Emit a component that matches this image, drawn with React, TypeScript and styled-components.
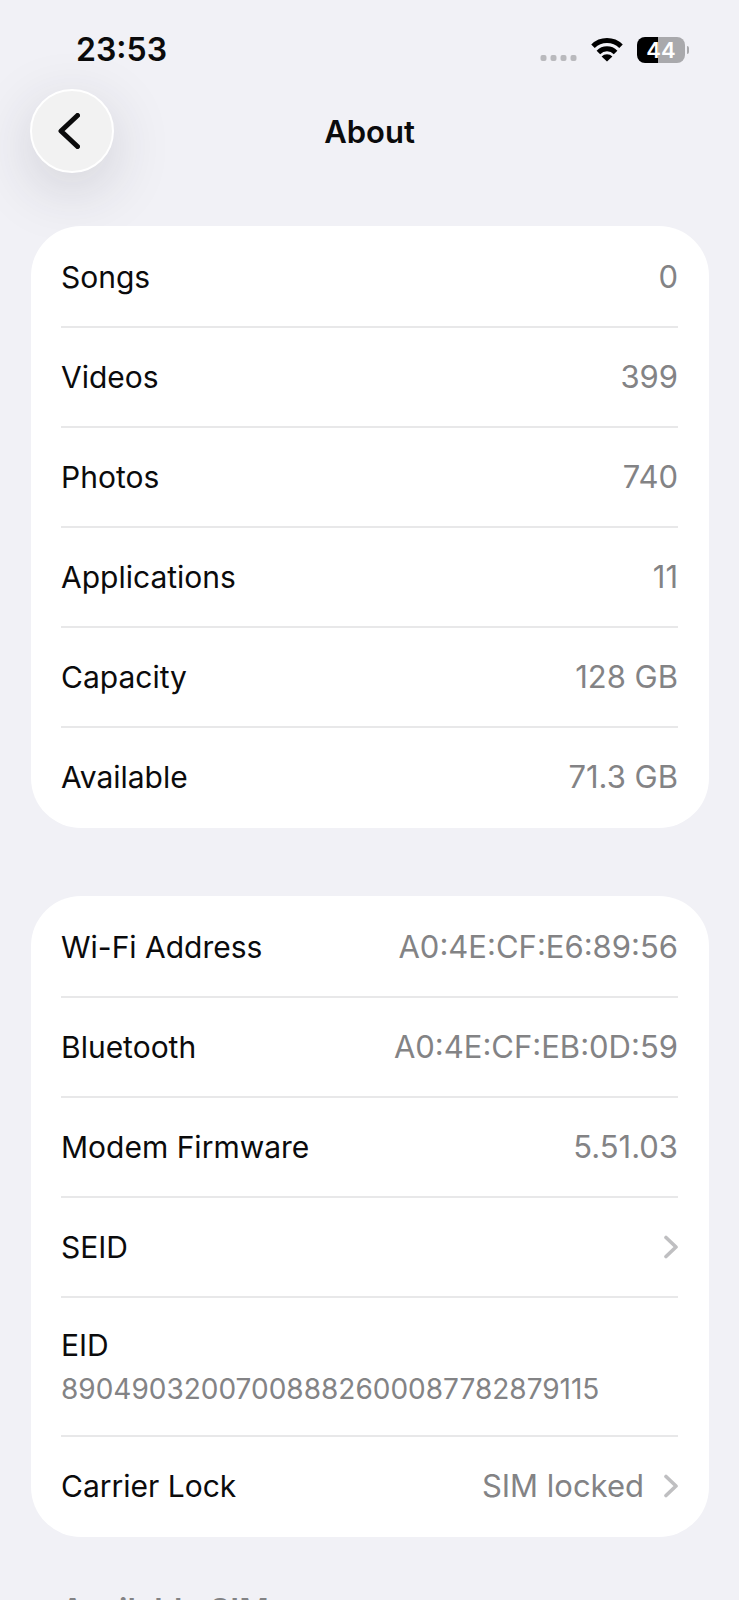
import React from 'react';
import styled, { createGlobalStyle } from 'styled-components';

const GlobalStyle = createGlobalStyle`
  *, *::before, *::after { box-sizing: border-box; }
  body { margin: 0; background: #f1f1f6; }
`;

const Screen = styled.div`
  display: flex;
  flex-direction: column;
  height: 100vh;
  overflow: hidden;
  background: #f1f1f6;
  color: #0b0b0c;
  font-family: Inter, Roboto, sans-serif;
  font-size: 31px;
  line-height: 38px;
`;

const StatusBar = styled.div`
  display: flex;
  flex: none;
  align-items: center;
  justify-content: space-between;
  height: 89px;
  padding: 10px 50px 0 76px;
`;

const Clock = styled.time`
  font-size: 32px;
  font-weight: 600;
`;

const StatusIcons = styled.div`
  display: flex;
  align-items: center;
`;

const SignalDots = styled.svg`
  display: block;
  margin: 16px 14px 0 0;
`;

const WifiIcon = styled.svg`
  display: block;
  margin-right: 14px;
`;

const Battery = styled.div`
  display: flex;
  align-items: center;
  gap: 2px;
`;

const BatteryBody = styled.div<{ $level: number }>`
  width: 48px;
  height: 26px;
  border-radius: 8px;
  background: linear-gradient(to right, #000 ${p => p.$level}%, #a9a9ac ${p => p.$level}%);
  color: #fff;
  font-size: 22px;
  font-weight: 600;
  line-height: 26px;
  text-align: center;
`;

const BatteryTip = styled.div`
  width: 2px;
  height: 8px;
  border-radius: 0 2px 2px 0;
  background: #a9a9ac;
`;

const NavBar = styled.header`
  display: grid;
  flex: none;
  grid-template-columns: 1fr auto 1fr;
  align-items: center;
  padding: 0 30px;
`;

const BackButton = styled.button`
  display: flex;
  align-items: center;
  justify-content: center;
  width: 84px;
  height: 84px;
  padding: 0 6px 0 0;
  border: 2px solid #fff;
  border-radius: 50%;
  background: #f2f2f2;
  color: #0b0b0c;
  box-shadow: 0 16px 60px rgba(40, 40, 60, 0.17);
`;

const Title = styled.h1`
  margin: 0;
  padding-top: 2px;
  font-size: 31px;
  font-weight: 600;
`;

const Content = styled.main`
  display: flex;
  flex: 1;
  flex-direction: column;
  min-height: 0;
  padding: 53px 30px 0 31px;
  overflow-y: auto;
  scrollbar-width: none;
`;

const Card = styled.ul`
  flex: none;
  margin: 0 0 68px;
  padding: 2px 31px 2px 30px;
  border-radius: 50px;
  background: #fff;
  list-style: none;
`;

const Item = styled.li`
  & + & { border-top: 2px solid #e8e8e9; }
`;

const Row = styled.div`
  display: flex;
  align-items: center;
  gap: 20px;
  width: 100%;
  min-height: 98px;
  padding: 0;
  border: 0;
  background: none;
  color: inherit;
  font: inherit;
  text-align: left;
`;

const StackedRow = styled.div`
  display: flex;
  flex-direction: column;
  justify-content: center;
  gap: 6px;
  min-height: 137px;
`;

const Label = styled.span`
  flex: 1;
  font-size: 30px;
`;

const Value = styled.span`
  color: #838385;
`;

const StackedLabel = styled.span`
  font-size: 30px;
`;

const LongValue = styled.span`
  color: #838385;
  font-size: 28px;
`;

const Heading = styled.h2`
  flex: none;
  margin: -13px 0 0;
  padding: 0 30px;
  color: #838385;
  font-size: 32px;
  font-weight: 600;
`;

type Entry = { label: string; value?: string; link?: boolean; stacked?: boolean };

const mediaEntries: Entry[] = [
  { label: 'Songs', value: '0' },
  { label: 'Videos', value: '399' },
  { label: 'Photos', value: '740' },
  { label: 'Applications', value: '11' },
  { label: 'Capacity', value: '128 GB' },
  { label: 'Available', value: '71.3 GB' },
];

const networkEntries: Entry[] = [
  { label: 'Wi-Fi Address', value: 'A0:4E:CF:E6:89:56' },
  { label: 'Bluetooth', value: 'A0:4E:CF:EB:0D:59' },
  { label: 'Modem Firmware', value: '5.51.03' },
  { label: 'SEID', link: true },
  { label: 'EID', value: '89049032007008882600087782879115', stacked: true },
  { label: 'Carrier Lock', value: 'SIM locked', link: true },
];

const Chevron = () => (
  <svg width="14" height="24" viewBox="0 0 14 24" fill="none" aria-hidden="true">
    <path d="M2 2.5L12 12L2 21.5" stroke="#bfbfc1" strokeWidth="3.6" strokeLinecap="round" strokeLinejoin="round" />
  </svg>
);

function EntryList({ entries }: { entries: Entry[] }) {
  return (
    <Card>
      {entries.map(({ label, value, link, stacked }) => (
        <Item key={label}>
          {stacked ? (
            <StackedRow>
              <StackedLabel>{label}</StackedLabel>
              <LongValue>{value}</LongValue>
            </StackedRow>
          ) : (
            <Row as={link ? 'button' : 'div'}>
              <Label>{label}</Label>
              {value && <Value>{value}</Value>}
              {link && <Chevron />}
            </Row>
          )}
        </Item>
      ))}
    </Card>
  );
}

export default function App() {
  return (
    <Screen>
      <GlobalStyle />
      <StatusBar>
        <Clock>23:53</Clock>
        <StatusIcons>
          <SignalDots width="37" height="6" viewBox="0 0 37 6" fill="#b9b9bd">
            {[0, 10, 20, 30].map(x => (
              <rect key={x} x={x + 0.5} width="6" height="6" rx="2" />
            ))}
          </SignalDots>
          <WifiIcon width="32" height="25" viewBox="0 0 32 25" fill="none" stroke="#000" strokeWidth="5">
            <path d="M2 9.2A20 20 0 0 1 30 9.2" />
            <path d="M7.4 15.4A12 12 0 0 1 24.6 15.4" />
            <path d="M16 24.5L10.6 19.4A7.6 7.6 0 0 1 21.4 19.4Z" fill="#000" stroke="none" />
          </WifiIcon>
          <Battery>
            <BatteryBody $level={44}>44</BatteryBody>
            <BatteryTip />
          </Battery>
        </StatusIcons>
      </StatusBar>
      <NavBar>
        <BackButton aria-label="Back">
          <svg width="22" height="36" viewBox="0 0 22 36" fill="none" aria-hidden="true">
            <path d="M19.5 2.5L3 18L19.5 33.5" stroke="currentColor" strokeWidth="5" strokeLinecap="round" strokeLinejoin="round" />
          </svg>
        </BackButton>
        <Title>About</Title>
      </NavBar>
      <Content>
        <EntryList entries={mediaEntries} />
        <EntryList entries={networkEntries} />
        <Heading>Available SIM</Heading>
      </Content>
    </Screen>
  );
}
